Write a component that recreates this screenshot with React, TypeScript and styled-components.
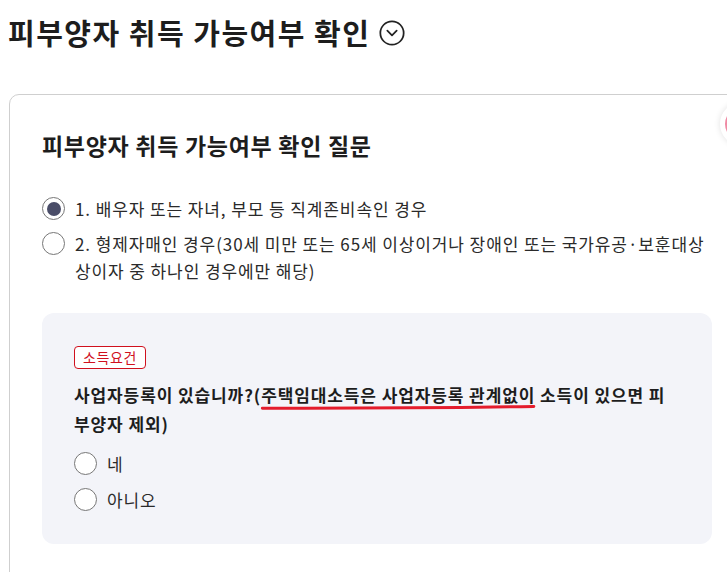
import React, { useState } from 'react';
import styled, { createGlobalStyle } from 'styled-components';
import { CircleChevronDown } from 'lucide-react';

const GlobalStyle = createGlobalStyle`
  html, body {
    margin: 0;
    padding: 0;
    background: #fff;
    overflow: hidden;
  }
  body {
    font-family: "Noto Sans CJK KR", "Roboto", sans-serif;
    color: #222;
  }
`;

const Page = styled.div`
  position: relative;
  width: 727px;
  height: 572px;
  overflow: hidden;
  padding: 12px 0 0 8px;
  box-sizing: border-box;
`;

const Header = styled.div`
  display: flex;
  align-items: center;
  gap: 8px;
  height: 40px;
`;

const Title = styled.h1`
  margin: 0;
  font-size: 29px;
  font-weight: 700;
  line-height: 40px;
  letter-spacing: 1.5px;
  color: #1d1d1d;
`;

const ToggleButton = styled.button`
  display: flex;
  align-items: center;
  justify-content: center;
  border: none;
  background: none;
  padding: 0;
  margin-top: 1px;
  color: #222;
  cursor: pointer;
`;

const Card = styled.section`
  margin-top: 42px;
  margin-left: 1px;
  width: 736px;
  min-height: 520px;
  box-sizing: border-box;
  border: 1px solid #cfcfcf;
  border-radius: 10px;
  padding: 34px 32px 32px 32px;
`;

const CardTitle = styled.h2`
  margin: 0;
  font-size: 23px;
  font-weight: 700;
  line-height: 32px;
  letter-spacing: 0.7px;
  color: #1d1d1d;
`;

const OptionList = styled.div`
  display: flex;
  flex-direction: column;
  gap: 8px;
  margin-top: 34px;
`;

const OptionRow = styled.label`
  display: flex;
  align-items: flex-start;
  gap: 10px;
  font-size: 17px;
  line-height: 27px;
  letter-spacing: 0.9px;
  color: #2a2a2a;
  cursor: pointer;
`;

const RadioCircle = styled.span<{ $checked?: boolean }>`
  flex: none;
  box-sizing: border-box;
  width: 23px;
  height: 23px;
  margin-top: 2px;
  border-radius: 50%;
  border: 1px solid #777;
  background: #fff;
  display: flex;
  align-items: center;
  justify-content: center;

  &::after {
    content: '';
    width: 14px;
    height: 14px;
    border-radius: 50%;
    background: ${p => (p.$checked ? '#4a4d68' : 'transparent')};
  }
`;

const OptionText = styled.span`
  flex: 1;
`;

const QuestionBox = styled.div`
  margin-top: 29px;
  background: #f3f4f9;
  border-radius: 12px;
  padding: 31px 32px 31px 32px;
`;

const Badge = styled.span`
  display: inline-block;
  box-sizing: border-box;
  height: 23px;
  padding: 0 8px;
  border: 1px solid #d0101e;
  border-radius: 4px;
  background: #fff;
  color: #d0101e;
  font-size: 14px;
  line-height: 21px;
  letter-spacing: 0.6px;
`;

const Question = styled.p`
  margin: 11px 0 0 0;
  font-size: 17px;
  font-weight: 700;
  line-height: 29px;
  letter-spacing: 0.9px;
  color: #1d1d1d;
`;

const Marked = styled.span`
  position: relative;
`;

const MarkStroke = styled.svg`
  position: absolute;
  left: 0;
  bottom: -4px;
  width: 100%;
  height: 8px;
  overflow: visible;
  pointer-events: none;
`;

const AnswerList = styled.div`
  display: flex;
  flex-direction: column;
  gap: 9px;
  margin-top: 12px;
`;

const FloatingDot = styled.div`
  position: absolute;
  left: 720px;
  top: 102px;
  width: 44px;
  height: 44px;
  border-radius: 50%;
  box-sizing: border-box;
  border: 5px solid #fff;
  background: #f08aa4;
  box-shadow: 0 0 6px rgba(0, 0, 0, 0.12);
`;

export default function App() {
  const [relation, setRelation] = useState(1);
  const [business, setBusiness] = useState<string | null>(null);

  return (
    <>
      <GlobalStyle />
      <Page>
        <Header>
          <Title>피부양자 취득 가능여부 확인</Title>
          <ToggleButton aria-label="펼치기">
            <CircleChevronDown size={28} strokeWidth={1.5} />
          </ToggleButton>
        </Header>

        <Card>
          <CardTitle>피부양자 취득 가능여부 확인 질문</CardTitle>

          <OptionList>
            <OptionRow onClick={() => setRelation(1)}>
              <RadioCircle $checked={relation === 1} />
              <OptionText>1. 배우자 또는 자녀, 부모 등 직계존비속인 경우</OptionText>
            </OptionRow>
            <OptionRow onClick={() => setRelation(2)}>
              <RadioCircle $checked={relation === 2} />
              <OptionText>
                2. 형제자매인 경우(30세 미만 또는 65세 이상이거나 장애인 또는 국가유공·보훈대상상이자 중 하나인 경우에만 해당)
              </OptionText>
            </OptionRow>
          </OptionList>

          <QuestionBox>
            <Badge>소득요건</Badge>
            <Question>
              사업자등록이 있습니까?(
              <Marked>
                주택임대소득은 사업자등록 관계없이
                <MarkStroke viewBox="0 0 100 8" preserveAspectRatio="none">
                  <path
                    d="M0.5 5.2 C 30 5.4, 70 4.8, 99.5 3.4"
                    stroke="#e41c2c"
                    strokeWidth="3"
                    strokeLinecap="round"
                    fill="none"
                    vectorEffect="non-scaling-stroke"
                  />
                </MarkStroke>
              </Marked>{' '}
              소득이 있으면 피부양자 제외)
            </Question>

            <AnswerList>
              <OptionRow onClick={() => setBusiness('yes')}>
                <RadioCircle $checked={business === 'yes'} />
                <OptionText>네</OptionText>
              </OptionRow>
              <OptionRow onClick={() => setBusiness('no')}>
                <RadioCircle $checked={business === 'no'} />
                <OptionText>아니오</OptionText>
              </OptionRow>
            </AnswerList>
          </QuestionBox>
        </Card>

        <FloatingDot />
      </Page>
    </>
  );
}
